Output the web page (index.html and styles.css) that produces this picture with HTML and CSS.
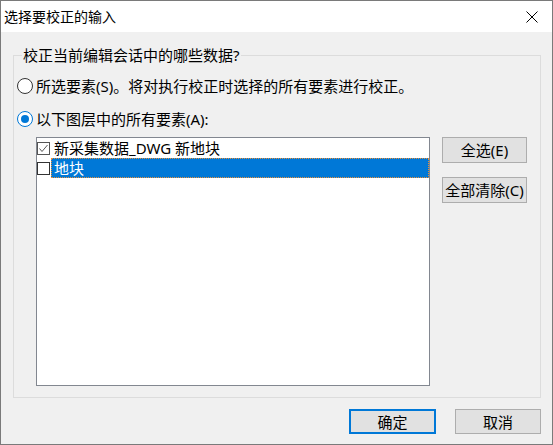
FILE: index.html
```html
<!DOCTYPE html>
<html lang="zh-CN">
<head>
<meta charset="utf-8">
<title>选择要校正的输入</title>
<link rel="stylesheet" href="styles.css">
</head>
<body>
<div class="window">
  <div class="titlebar">
    <span class="title">选择要校正的输入</span>
    <svg class="close" width="12" height="12" viewBox="0 0 12 12"><path d="M0.5 0.5 L11.5 11.5 M11.5 0.5 L0.5 11.5" stroke="#000" stroke-width="1" fill="none"/></svg>
  </div>
  <div class="content">
    <fieldset class="group">
      <legend class="legend">校正当前编辑会话中的哪些数据?</legend>
      <div class="radio-row row-first">
        <span class="radio"></span>
        <span class="label">所选要素(S)。将对执行校正时选择的所有要素进行校正。</span>
      </div>
      <div class="radio-row row-second">
        <span class="radio checked"></span>
        <span class="label">以下图层中的所有要素(A):</span>
      </div>
      <div class="list-area">
        <div class="listbox">
          <div class="item">
            <span class="check on"><svg width="13" height="13" viewBox="0 0 13 13"><path d="M2.5 6.5 L5 9.5 L10.5 3" stroke="#5a5a5a" stroke-width="1" fill="none"/></svg></span>
            <span class="item-text">新采集数据_DWG 新地块</span>
          </div>
          <div class="item">
            <span class="check"></span>
            <span class="item-text selected">地块</span>
          </div>
        </div>
        <div class="side-buttons">
          <button class="btn">全选(E)</button>
          <button class="btn">全部清除(C)</button>
        </div>
      </div>
    </fieldset>
    <div class="footer">
      <button class="btn btn-default">确定</button>
      <button class="btn">取消</button>
    </div>
  </div>
</div>
</body>
</html>
```
FILE: styles.css
```css
html, body {
  margin: 0;
  padding: 0;
  background: #f0f0f0;
}

body {
  font-family: "Noto Sans", "Noto Sans CJK SC", sans-serif;
  font-size: 15px;
  color: #000;
}

.window {
  width: 553px;
  height: 445px;
  box-sizing: border-box;
  border: 1px solid #7a7a7a;
  background: #f0f0f0;
  display: flex;
  flex-direction: column;
}

.titlebar {
  height: 31px;
  background: #fff;
  display: flex;
  align-items: center;
  justify-content: space-between;
  padding: 0 14px 0 3px;
  flex: none;
}

.title {
  font-size: 14px;
  line-height: 20px;
  margin-top: 1px;
}

.close {
  display: block;
  margin-top: 1px;
}

.content {
  flex: 1;
  display: flex;
  flex-direction: column;
  padding: 0 11px 0 12px;
}

.group {
  margin: 13px 0 0 0;
  border: 1px solid #dcdcdc;
  padding: 0 12px 0 3px;
  height: 353px;
  box-sizing: border-box;
  min-width: 0;
}

.legend {
  padding: 0 1px;
  margin-left: 5px;
  line-height: 20px;
}

.radio-row {
  display: flex;
  align-items: center;
  height: 20px;
  gap: 3px;
}

.row-first {
  margin-top: 11px;
}

.row-second {
  margin-top: 13px;
}

.radio {
  width: 16px;
  height: 16px;
  box-sizing: border-box;
  border: 1px solid #333;
  border-radius: 50%;
  background: #fff;
  flex: none;
  display: flex;
  align-items: center;
  justify-content: center;
}

.radio.checked {
  border-color: #0078d7;
}

.radio.checked::after {
  content: "";
  width: 8px;
  height: 8px;
  border-radius: 50%;
  background: #0078d7;
}

.label {
  line-height: 20px;
  white-space: nowrap;
}

.list-area {
  display: flex;
  margin-top: 8px;
}

.listbox {
  margin-left: 19px;
  width: 394px;
  height: 249px;
  box-sizing: border-box;
  border: 1px solid #828790;
  background: #fff;
  padding-top: 0;
}

.item {
  display: flex;
  align-items: center;
  height: 20px;
  padding-left: 0;
}

.check {
  width: 13px;
  height: 13px;
  box-sizing: border-box;
  border: 1px solid #333;
  background: #fff;
  flex: none;
}

.check svg {
  display: block;
  margin: -1px;
}

.check.on {
  border-color: #555;
}

.item-text {
  margin-left: 1px;
  padding: 0 2px;
  line-height: 18px;
  white-space: nowrap;
  border: 1px solid transparent;
}

.item-text.selected {
  flex: 1;
  background: #0078d7;
  color: #fff;
  border: 1px dotted #e8903a;
}

.side-buttons {
  margin-left: 12px;
  display: flex;
  flex-direction: column;
  gap: 14px;
}

.btn {
  font-family: "Noto Sans", "Noto Sans CJK SC", sans-serif;
  font-size: 15px;
  color: #000;
  width: 85px;
  height: 26px;
  box-sizing: border-box;
  border: 1px solid #adadad;
  background: #e1e1e1;
  padding: 0;
  line-height: 22px;
  border-radius: 0;
}

.footer {
  display: flex;
  justify-content: flex-end;
  gap: 19px;
  margin-top: 11px;
}

.footer .btn {
  width: 87px;
  height: 25px;
}

.footer .btn:last-child {
  width: 86px;
}

.btn-default {
  border: 2px solid #0078d7;
}
```
